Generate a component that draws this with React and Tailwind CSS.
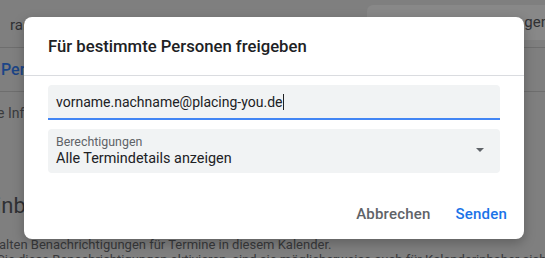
export default function App() {
  return (
    <div className="relative w-[545px] h-[258px] overflow-hidden bg-[#7f7f7f] font-['Roboto',sans-serif]">
      {/* dimmed page behind the dialog */}
      <div className="flex flex-col text-[#303134]">
        <div className="h-[48px] flex items-start border-b border-[#6e6e6e]">
          <div className="pl-[10px] pt-[15px] text-[15px] leading-[20px] w-[367px]">ran</div>
          <div className="mt-[5px] h-[35px] flex-1 bg-[#888888] rounded-l-[6px] flex items-center justify-end mr-[-4px] text-[15px] overflow-hidden">
            <span className="ml-auto">gen</span>
          </div>
        </div>
        <div className="h-[44px] border-b border-[#6e6e6e] flex items-center">
          <span className="text-[16px] font-medium text-[#1c4587] pl-[1px] pt-[1px]">Pers</span>
        </div>
        <div className="text-[14px] leading-[20px] mt-[11px] ml-[-3px] text-[#3a3b3d]">e Info</div>
        <div className="text-[22px] leading-[28px] mt-[69px] ml-[-4px]">inb</div>
        <div className="mt-[17px] text-[13px] leading-[15px] ml-[-1px] text-[#38393b] whitespace-nowrap">
          alten Benachrichtigungen für Termine in diesem Kalender.
        </div>
        <div className="text-[13px] leading-[15px] ml-[-3px] text-[#38393b] whitespace-nowrap">
          Sie diese Benachrichtigungen aktivieren, sind sie möglicherweise auch für Kalenderinhaber sichtbar
        </div>
      </div>

      {/* dialog */}
      <div className="absolute left-[24px] top-[17px] w-[500px] h-[222px] bg-white rounded-[8px] shadow-[0_4px_12px_rgba(0,0,0,0.25)] flex flex-col">
        <div className="pt-[18px] pb-[16px] px-[24px] text-[16.7px] leading-[24px] font-medium text-[#202124] border-b border-[#dadce0]">
          Für bestimmte Personen freigeben
        </div>
        <div className="px-[24px] pt-[9px] flex flex-col gap-[9px]">
          <div className="h-[35px] bg-[#f1f3f4] rounded-t-[4px] border-b-2 border-[#4285f4] flex items-center px-[8px]">
            <span className="text-[14px] leading-[20px] text-[#202124]">vorname.nachname@placing-you.de</span>
            <span className="w-px h-[16px] bg-[#202124] ml-[1px]"></span>
          </div>
          <div className="h-[44px] bg-[#f1f3f4] rounded-[4px] flex items-center px-[8px]">
            <div className="flex-1 flex flex-col pt-[1px]">
              <span className="text-[12.4px] leading-[14px] text-[#5f6368]">Berechtigungen</span>
              <span className="text-[14.4px] leading-[19px] text-[#202124]">Alle Termindetails anzeigen</span>
            </div>
            <svg width="8" height="4" viewBox="0 0 8 4" className="mr-[8px] mb-[2px]">
              <path d="M0 0 L8 0 L4 4 Z" fill="#5f6368" />
            </svg>
          </div>
        </div>
        <div className="flex-1 flex items-center justify-end gap-[25px] pr-[17px] pt-[16px] text-[15px] font-medium tracking-[0.2px]">
          <button className="text-[#5f6368]">Abbrechen</button>
          <button className="text-[#1a73e8]">Senden</button>
        </div>
      </div>
    </div>
  );
}
